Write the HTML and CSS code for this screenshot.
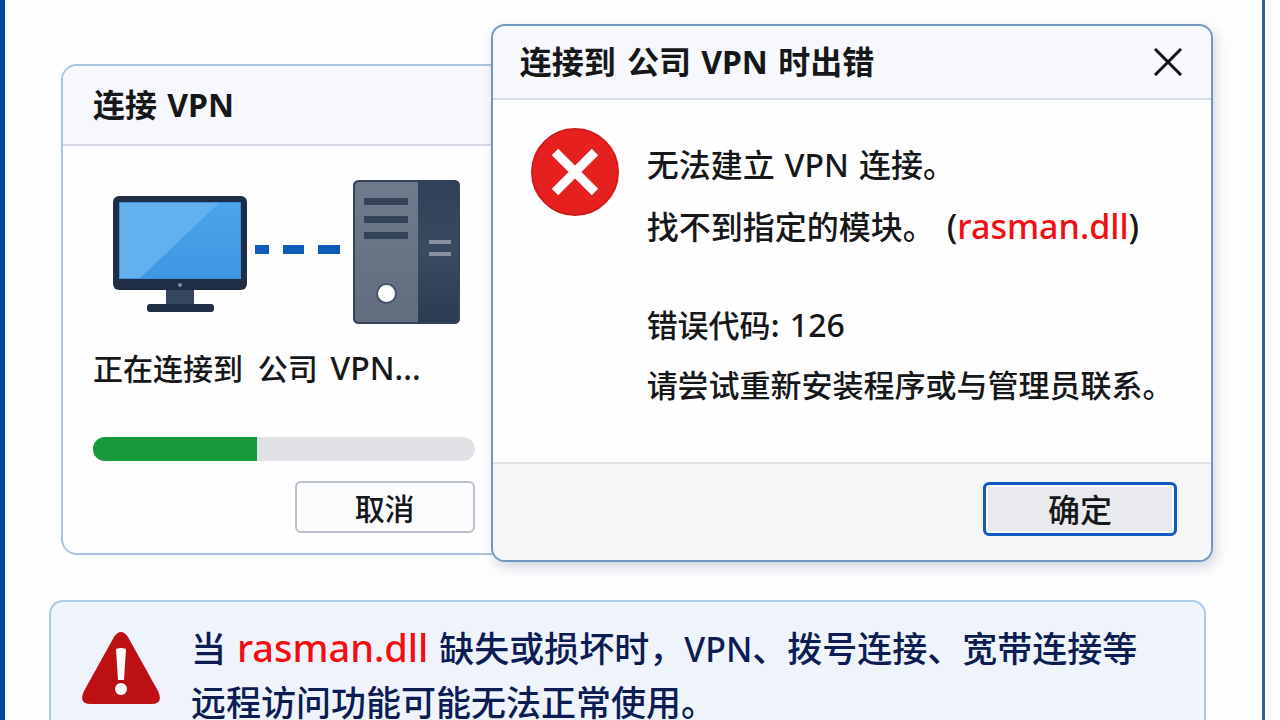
FILE: index.html
```html
<!DOCTYPE html>
<html lang="zh-CN">
<head>
<meta charset="utf-8">
<meta name="viewport" content="width=device-width, initial-scale=1">
<title>连接到 公司 VPN 时出错</title>
<link rel="stylesheet" href="styles.css">
</head>
<body>
<main class="frame">
  <div class="windows">
    <section class="window connect" aria-labelledby="connect-title">
      <header class="titlebar connect-bar"><h2 class="title" id="connect-title">连接 <span class="latin">VPN</span></h2></header>
      <div class="connect-body">
        <svg class="scene" viewBox="0 0 350 148" aria-hidden="true">
          <defs>
            <linearGradient id="screen" x1="0" y1="0" x2="0" y2="1"><stop offset="0" stop-color="#4ca5ea"/><stop offset="1" stop-color="#3d98e2"/></linearGradient>
            <linearGradient id="front" x1="0" y1="0" x2="0" y2="1"><stop offset="0" stop-color="#6f7b8c"/><stop offset="1" stop-color="#626e80"/></linearGradient>
            <linearGradient id="side" x1="0" y1="0" x2="0" y2="1"><stop offset="0" stop-color="#2f4058"/><stop offset="0.5" stop-color="#3a4a60"/><stop offset="1" stop-color="#2b3b52"/></linearGradient>
          </defs>
          <rect x="3" y="18" width="134" height="94" rx="6" fill="#1f2e44"/>
          <rect x="9" y="24" width="122" height="77" fill="url(#screen)"/>
          <path d="M9 24H110L29 101H9Z" fill="#62b1ee"/>
          <rect x="9.500" y="24.500" width="121" height="76" fill="none" stroke="#3a91dc"/>
          <circle cx="70" cy="107" r="2" fill="#8190a3"/>
          <path d="M56 112H84V126H56Z" fill="#35465e"/>
          <rect x="37" y="126" width="67" height="8" rx="3" fill="#1f2e44"/>
          <path d="M145 67h14v9h-14zM173 67h21v9h-21zM208 67h22v9h-22z" fill="#0d5cba"/>
          <path d="M249 2H309V146H249Q243 146 243 140V8Q243 2 249 2Z" fill="url(#front)"/>
          <path d="M308 2H344Q350 2 350 8V140Q350 146 344 146H308Z" fill="url(#side)"/>
          <rect x="244" y="3" width="105" height="142" rx="5" fill="none" stroke="#34445b" stroke-width="2"/>
          <path d="M254 20h44v7h-44zM254 38h44v7h-44zM254 54h44v7h-44z" fill="#344256"/>
          <path d="M319 62h22v4h-22zM319 74h22v4h-22z" fill="#87909e"/>
          <circle cx="276.500" cy="115.500" r="9.500" fill="#fff" stroke="#465469" stroke-width="2"/>
        </svg>
        <p class="status" id="status">正在连接到 <span class="name">公司</span> <span class="latin">VPN...</span></p>
        <div class="progress" role="progressbar" aria-labelledby="status" aria-valuemin="0" aria-valuemax="100" aria-valuenow="43"><div class="progress-fill" style="width:43%"></div></div>
        <button class="btn cancel" type="button">取消</button>
      </div>
    </section>

    <section class="window dialog" role="alertdialog" aria-labelledby="error-title" aria-describedby="error-text">
      <header class="titlebar dialog-bar">
        <h2 class="title" id="error-title">连接到 <span class="name">公司</span> <span class="latin">VPN</span> 时出错</h2>
        <button class="close" type="button" aria-label="关闭"><svg viewBox="0 0 28 28" aria-hidden="true"><path d="M1 1L27 27M27 1L1 27" stroke="#111" stroke-width="3"/></svg></button>
      </header>
      <div class="dialog-body">
        <svg class="error-icon" viewBox="0 0 88 88" aria-hidden="true"><circle cx="44" cy="44" r="43" fill="#e5201e" stroke="#d21a18" stroke-width="2"/><path d="M24 24L64 64M64 24L24 64" stroke="#fff" stroke-width="9"/></svg>
        <div class="message" id="error-text">
          <div class="reason">
            <p>无法建立 <span class="latin">VPN</span> 连接。</p>
            <p>找不到指定的模块。<span class="latin module">(<span class="dll">rasman.dll</span>)</span></p>
          </div>
          <div class="advice">
            <p>错误代码: <span class="latin">126</span></p>
            <p>请尝试重新安装程序或与管理员联系。</p>
          </div>
        </div>
      </div>
      <footer class="dialog-footer"><button class="btn ok" type="button">确定</button></footer>
    </section>
  </div>

  <aside class="notice">
    <svg class="warn-icon" viewBox="0 0 80 74" aria-hidden="true"><path d="M33 6Q40 -4 47 6L77 60Q83 73 70 73H10Q-3 73 3 60Z" fill="#bd1015"/><path d="M35 18Q40 16 45 18L43 49H37Z" fill="#fff"/><circle cx="40" cy="58" r="6" fill="#fff"/></svg>
    <p class="notice-text">当 <span class="latin dll">rasman.dll</span> 缺失或损坏时，<span class="latin abbr">VPN</span>、拨号连接、宽带连接等<br>远程访问功能可能无法正常使用。</p>
  </aside>
</main>
</body>
</html>
```
FILE: styles.css
```css
* { box-sizing: border-box; }

body {
  margin: 0;
  background: #fdfdfe;
  color: #161719;
  font-family: "Noto Sans CJK SC", "Noto Sans", sans-serif;
  font-size: 30px;
  font-weight: 500;
}

h2, p { margin: 0; }

button {
  font: inherit;
  color: inherit;
  cursor: pointer;
}

.latin {
  margin: 0 3px;
  font-family: "Noto Sans", sans-serif;
  font-size: 32px;
  font-weight: 500;
  line-height: 1;
}

.name { margin-left: 4px; }

.dll { color: #f30d12; }

.frame {
  height: 100vh;
  margin-right: 15px;
  padding: 24px 50px 0 44px;
  overflow: hidden;
  border-left: 5px solid #07479c;
  border-right: 3px solid #2e62a8;
}

.windows {
  display: grid;
  grid-template-columns: 430fr 723fr;
  align-items: start;
  margin: 0 -1px 0 12px;
}

.window {
  background: #fefefe;
  border: 2px solid #a9c3e0;
  border-radius: 16px;
}

.titlebar {
  display: flex;
  align-items: center;
  justify-content: space-between;
  background: #f7f8fb;
  border-bottom: 2px solid #d4dbe6;
}

.title {
  padding-bottom: 4px;
  font-size: 32px;
  font-weight: 700;
  line-height: 48px;
}

.title .latin { font-weight: 700; }

.connect {
  margin: 40px -20px 0 0;
}

.connect-bar {
  height: 80px;
  padding: 0 30px;
  border-radius: 14px 14px 0 0;
}

.connect-body {
  display: flex;
  flex-direction: column;
  padding: 32px 34px 20px 30px;
}

.scene {
  width: 350px;
  height: 148px;
  margin-left: 17px;
}

.status {
  margin-top: 17px;
  line-height: 48px;
}

.status .name { margin: 0 3px 0 8px; }

.progress {
  height: 24px;
  margin-top: 46px;
  overflow: hidden;
  background: #e0e2e6;
  border-radius: 12px;
}

.progress-fill {
  height: 100%;
  background: #179b3a;
}

.btn {
  padding: 0;
  line-height: 48px;
  border: 2px solid #bcc0ca;
  border-radius: 6px;
}

.cancel {
  width: 180px;
  margin-top: 20px;
  align-self: flex-end;
  background: #fbfcfe;
}

.dialog {
  position: relative;
  border-color: #7296c3;
  border-radius: 14px;
  box-shadow: 3px 5px 12px rgba(40, 60, 100, 0.2);
}

.dialog-bar {
  height: 74px;
  padding: 0 29px 0 27px;
  border-radius: 12px 12px 0 0;
}

.close {
  display: flex;
  padding: 0;
  background: none;
  border: 0;
}

.close svg {
  width: 28px;
  height: 28px;
}

.dialog-body {
  display: flex;
  gap: 28px;
  padding: 28px 20px 48px 38px;
}

.error-icon {
  flex: none;
  width: 88px;
  height: 88px;
}

.message {
  padding-top: 4px;
  white-space: nowrap;
}

.reason {
  font-size: 32px;
  line-height: 62px;
}

.module {
  margin-left: 12px;
  font-size: 34px;
}

.module .dll { margin: 0; }

.advice {
  margin-top: 38px;
  font-size: 31px;
  line-height: 60px;
}

.dialog-footer {
  display: flex;
  justify-content: flex-end;
  padding: 18px 34px 24px;
  background: #f5f6f8;
  border-top: 2px solid #dfe2e8;
  border-radius: 0 0 12px 12px;
}

.ok {
  width: 194px;
  padding-bottom: 2px;
  font-size: 32px;
  line-height: 46px;
  background: #e9eaed;
  border: 3px solid #0f59c0;
  box-shadow: inset 0 0 0 2px #fafbfd;
}

.notice {
  display: flex;
  gap: 30px;
  margin: 38px 6px 0 0;
  padding: 18px 30px;
  color: #0d1c53;
  background: #eff4fc;
  border: 2px solid #abcbe9;
  border-radius: 14px;
}

.warn-icon {
  flex: none;
  width: 80px;
  height: 74px;
  margin-top: 11px;
}

.notice-text {
  font-size: 35px;
  line-height: 54px;
  white-space: nowrap;
}

.notice-text .latin { font-size: 38px; }

.notice-text .abbr {
  margin: 0;
  font-size: 34px;
}
```
